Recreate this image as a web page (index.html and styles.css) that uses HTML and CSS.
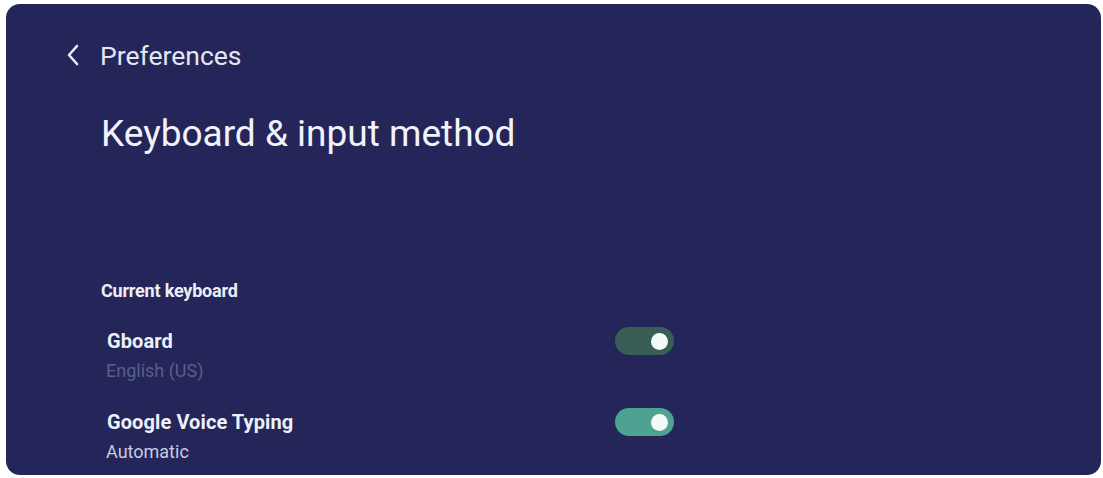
FILE: index.html
```html
<!DOCTYPE html>
<html lang="en">
<head>
  <meta charset="UTF-8">
  <meta name="viewport" content="width=device-width, initial-scale=1">
  <title>Keyboard &amp; input method</title>
  <link rel="stylesheet" href="styles.css">
</head>
<body>
  <div class="panel">
    <div class="back-row">
      <svg class="back-icon" width="16" height="24" viewBox="0 0 16 24">
        <path d="M12 3 L4 12 L12 21" fill="none" stroke="currentColor" stroke-width="2.6" stroke-linecap="round" stroke-linejoin="round"/>
      </svg>
      <span class="back-label">Preferences</span>
    </div>

    <h1 class="title">Keyboard &amp; input method</h1>

    <div class="section">
      <div class="section-label">Current keyboard</div>

      <div class="item">
        <div class="item-text">
          <div class="item-name">Gboard</div>
          <div class="item-sub dim">English (US)</div>
        </div>
        <div class="toggle dark"><div class="knob"></div></div>
      </div>

      <div class="item">
        <div class="item-text">
          <div class="item-name">Google Voice Typing</div>
          <div class="item-sub">Automatic</div>
        </div>
        <div class="toggle on"><div class="knob"></div></div>
      </div>
    </div>
  </div>
</body>
</html>
```

FILE: styles.css
```css
* {
  margin: 0;
  padding: 0;
  box-sizing: border-box;
}

body {
  width: 1103px;
  height: 478px;
  background: #ffffff;
  font-family: Roboto, 'Noto Sans', sans-serif;
  color: #eef0f8;
  padding: 4px 2px 3px 6px;
  overflow: hidden;
}

.panel {
  height: 471px;
  background: #24265a;
  border-radius: 14px;
  padding: 36px 0 0 59px;
}

.back-row {
  display: flex;
  align-items: center;
  gap: 19px;
  height: 30px;
}

.back-icon {
  color: #e8eaf5;
}

.back-label {
  font-size: 26.5px;
  color: #e4e6f2;
}

.title {
  font-size: 37px;
  font-weight: 400;
  color: #f2f3fa;
  margin: 42px 0 0 36px;
  line-height: 44px;
}

.section {
  margin: 124px 0 0 36px;
}

.section-label {
  font-size: 18px;
  font-weight: 700;
  letter-spacing: -0.2px;
  line-height: 22px;
  color: #eceef8;
}

.item {
  display: flex;
  align-items: flex-start;
  margin-top: 26px;
  padding-left: 6px;
}

.item + .item {
  margin-top: 27px;
}

.item-text {
  width: 508px;
}

.item-name {
  font-size: 20px;
  font-weight: 700;
  line-height: 26px;
  letter-spacing: 0.1px;
  color: #eef0f8;
}

.item-sub {
  font-size: 18px;
  line-height: 22px;
  margin-top: 6px;
  margin-left: -1px;
  color: #c9cbe0;
}

.item-sub.dim {
  color: #5b5e8c;
}

.toggle {
  width: 59px;
  height: 28px;
  border-radius: 14px;
  display: flex;
  align-items: center;
  justify-content: flex-end;
  padding-right: 6px;
  margin-top: -1px;
}

.toggle.dark {
  background: #3a5d55;
}

.toggle.on {
  background: #4ea292;
}

.knob {
  width: 17px;
  height: 17px;
  border-radius: 50%;
  background: #f4faf8;
}
```
